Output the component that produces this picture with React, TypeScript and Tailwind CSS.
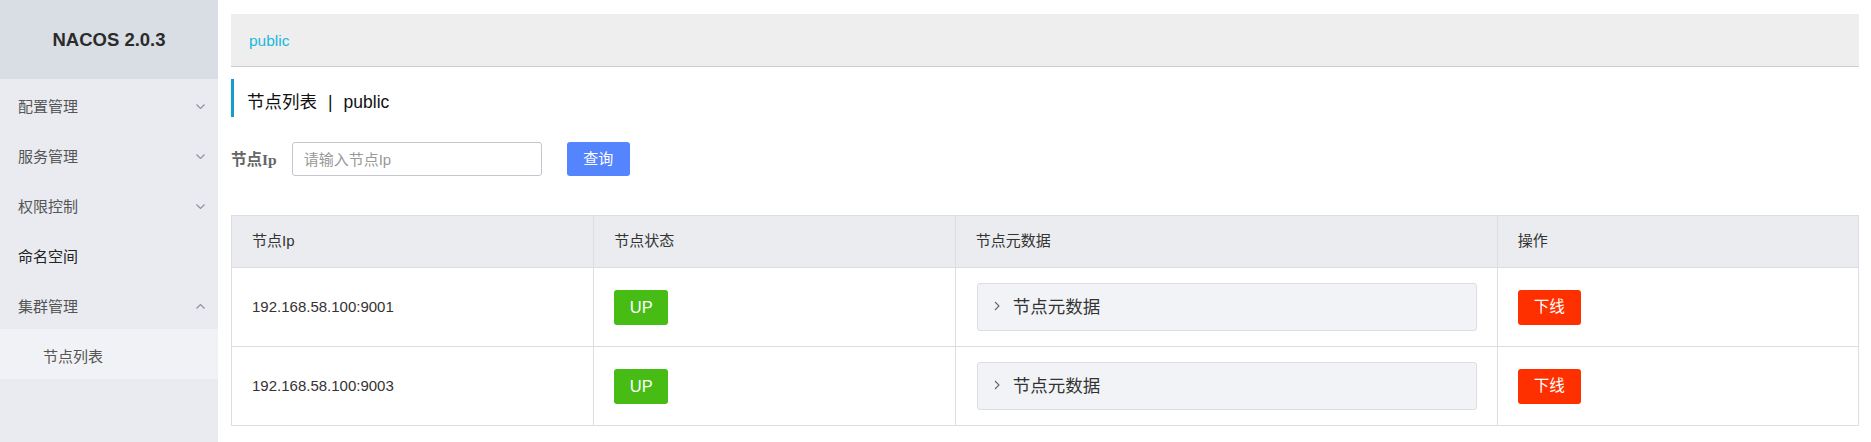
const FONT = "[font-family:'Liberation_Sans','Noto_Sans_CJK_SC',sans-serif]";

const MENU: Array<{ label: string; arrow: "down" | "up" | null; strong?: boolean }> = [
  { label: "配置管理", arrow: "down" },
  { label: "服务管理", arrow: "down" },
  { label: "权限控制", arrow: "down" },
  { label: "命名空间", arrow: null, strong: true },
  { label: "集群管理", arrow: "up" },
];

const NODES = ["192.168.58.100:9001", "192.168.58.100:9003"];

export default function App() {
  return (
    <div className={`flex min-h-screen bg-white ${FONT}`}>
      <Sidebar />

      <main className="flex-1 pl-[13px] pr-[12px]">
        <div className="mt-[14px] flex h-[53px] items-center border-b border-[#cccccc] bg-[#eeeeee] pl-[18px] pt-[2px] text-[15.5px] text-[#1db8dc]">
          public
        </div>

        <div className="mt-[12px] flex h-[38px] items-center border-l-[3px] border-[#129ec9] pl-[13px] pt-[8px] text-[17.5px] text-[#111]">
          节点列表
          <span className="mx-[11px]">|</span>
          public
        </div>

        <div className="mt-[25px] flex items-center">
          <label className="mr-[15px] pt-[2px] [font-family:'Liberation_Serif','Noto_Sans_CJK_SC',serif] text-[15.5px] font-bold text-[#666]">
            节点Ip
          </label>
          <input
            className="h-[34px] w-[250px] rounded-[3px] border border-[#c4c6cf] px-[11px] text-[15px] text-[#333] outline-none placeholder:text-[#999]"
            placeholder="请输入节点Ip"
          />
          <button
            className="ml-[25px] h-[34px] w-[63px] rounded-[3px] bg-[#5584ff] text-[15px] text-white"
            type="button"
          >
            查询
          </button>
        </div>

        <div className="mt-[39px] border border-[#dcdee3]">
          <div className="grid h-[52px] grid-cols-[2fr_2fr_3fr_2fr] border-b border-[#dcdee3] bg-[#ebecf0] text-[15px] text-[#333]">
            <HeadCell first>节点Ip</HeadCell>
            <HeadCell>节点状态</HeadCell>
            <HeadCell>节点元数据</HeadCell>
            <HeadCell>操作</HeadCell>
          </div>

          {NODES.map((ip, index) => (
            <div
              key={ip}
              className={`grid grid-cols-[2fr_2fr_3fr_2fr] text-[15px] text-[#333] ${
                index === NODES.length - 1 ? "h-[78px]" : "h-[79px] border-b border-[#dcdee3]"
              }`}
            >
              <div className="flex items-center px-[20px]">{ip}</div>
              <div className="flex items-center border-l border-[#dcdee3] px-[20px]">
                <span className="flex h-[35px] w-[54px] items-center justify-center rounded-[3px] bg-[#46bc15] text-[16.5px] text-white">
                  UP
                </span>
              </div>
              <div className="flex items-center border-l border-[#dcdee3] px-[21px] pr-[20px]">
                <div className="flex h-[48px] w-full items-center rounded-[3px] border border-[#dcdee3] bg-[#f2f3f7] pl-[16px] text-[17.5px] text-[#333]">
                  <svg width="6" height="10" viewBox="0 0 6 10" className="mr-[13px] mt-[-3px]">
                    <path d="M1 1 L5 5 L1 9" fill="none" stroke="#666" strokeWidth="1.1" />
                  </svg>
                  节点元数据
                </div>
              </div>
              <div className="flex items-center border-l border-[#dcdee3] px-[20px]">
                <button
                  className="h-[35px] w-[63px] rounded-[3px] bg-[#ff3000] text-[15.5px] text-white"
                  type="button"
                >
                  下线
                </button>
              </div>
            </div>
          ))}
        </div>
      </main>
    </div>
  );
}

function Arrow({ up }: { up?: boolean }) {
  return (
    <svg width="9" height="5" viewBox="0 0 9 5" className="mt-[4px]">
      <path
        d={up ? "M0.5 4.5 L4.5 0.5 L8.5 4.5" : "M0.5 0.5 L4.5 4.5 L8.5 0.5"}
        fill="none"
        stroke="#8a8f99"
        strokeWidth="1.1"
      />
    </svg>
  );
}

function Sidebar() {
  return (
    <aside className="w-[218px] shrink-0 bg-[#e9ebf0]">
      <div className="flex h-[79px] items-center justify-center bg-[#d9dde4] text-[18.5px] font-bold text-[#2b2b2b]">
        NACOS 2.0.3
      </div>
      {MENU.map((item) => (
        <div
          key={item.label}
          className={`flex h-[50px] items-center justify-between pl-[18px] pr-[13px] text-[15px] ${
            item.strong ? "text-[#222]" : "text-[#555]"
          }`}
        >
          <span className="pt-[6px]">{item.label}</span>
          {item.arrow === "down" ? <Arrow /> : item.arrow === "up" ? <Arrow up /> : null}
        </div>
      ))}
      <div className="flex h-[50px] items-center bg-[#f1f2f6] pl-[43px] pt-[6px] text-[15px] text-[#555]">
        节点列表
      </div>
    </aside>
  );
}

function HeadCell({ children, first }: { children: React.ReactNode; first?: boolean }) {
  return (
    <div className={`flex items-center px-[20px] ${first ? "" : "border-l border-[#dcdee3]"}`}>
      {children}
    </div>
  );
}
